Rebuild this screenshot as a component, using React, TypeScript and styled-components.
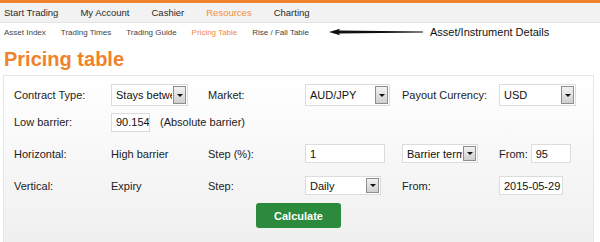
import React from 'react'
import styled, { createGlobalStyle } from 'styled-components'

const Global = createGlobalStyle`
	body {
		margin: 0;
		background: #fff;
		font-family: 'Liberation Sans', Arial, sans-serif;
		color: #333;
	}
`

const ORANGE = '#f0822b'

const TopNav = styled.nav`
	border-top: 3px solid ${ORANGE};
	background: #f2f2f2;
	border-bottom: 1px solid #e2e2e2;
	height: 19px;
	display: flex;
	align-items: center;
	gap: 22px;
	padding-left: 4px;
	font-size: 9.5px;
`

const NavItem = styled.span<{ $active?: boolean }>`
	color: ${(p) => (p.$active ? '#f39040' : '#2a2a2a')};
`

const SubNav = styled.div`
	height: 18px;
	display: flex;
	align-items: center;
	padding-left: 4px;
	font-size: 8px;
`

const SubItems = styled.div`
	display: flex;
	gap: 15px;
`

const SubItem = styled.span<{ $active?: boolean }>`
	color: ${(p) => (p.$active ? '#f18a3c' : '#444')};
`

const Note = styled.div`
	display: flex;
	align-items: center;
	margin-left: 20px;
	gap: 7px;
	font-size: 11px;
	color: #111;
`

const Heading = styled.h1`
	margin: 5px 0 0 4px;
	font-size: 20px;
	line-height: 26px;
	font-weight: bold;
	color: ${ORANGE};
`

const Panel = styled.section`
	margin: 3px 6px 0 3px;
	border: 1px solid #e6e6e6;
	border-bottom: none;
	background: linear-gradient(#fff, #efefef);
	padding: 8px 10px 20px;
	font-size: 11px;
	color: #222;
`

const Grid = styled.div`
	display: grid;
	grid-template-columns: repeat(6, 97px);
	grid-template-rows: 22px 32px 31px 33px;
	align-items: center;
`

const Cell = styled.div`
	display: flex;
	align-items: center;
	gap: 10px;
	white-space: nowrap;
`

const FromCell = styled(Cell)`
	gap: 3px;
`

const Field = styled.div<{ $w: number; $h?: number }>`
	width: ${(p) => p.$w}px;
	height: ${(p) => p.$h ?? 19}px;
	flex-shrink: 0;
	box-sizing: border-box;
	border: 1px solid #dcdcdc;
	background: #fff;
	display: flex;
	align-items: center;
	overflow: hidden;
	font-size: 11px;
	color: #111;
`

const FieldText = styled.span`
	flex: 1;
	padding-left: 4px;
	overflow: hidden;
	white-space: nowrap;
`

const DropButton = styled.span`
	width: 13px;
	align-self: stretch;
	margin: 1px;
	box-sizing: border-box;
	border: 1px solid #8e8e8e;
	background: linear-gradient(#f2f2f2, #cfcfcf);
	display: flex;
	align-items: center;
	justify-content: center;

	&::after {
		content: '';
		border-left: 3px solid transparent;
		border-right: 3px solid transparent;
		border-top: 3px solid #111;
	}
`

const Actions = styled.div`
	display: flex;
	justify-content: center;
	margin-top: 1px;
`

const CalcButton = styled.button`
	width: 85px;
	height: 25px;
	border: none;
	border-radius: 3px;
	background: #2b8a3b;
	color: #fff;
	font-family: inherit;
	font-size: 11px;
	font-weight: bold;
`

function Select({ value, w, h }: { value: string; w: number; h?: number }) {
	return (
		<Field $w={w} $h={h}>
			<FieldText>{value}</FieldText>
			<DropButton />
		</Field>
	)
}

function Input({ value, w }: { value: string; w: number }) {
	return (
		<Field $w={w}>
			<FieldText>{value}</FieldText>
		</Field>
	)
}

function Arrow() {
	return (
		<svg width="94" height="8" viewBox="0 0 94 8">
			<polygon points="0,4 11,0.8 10,2.6 94,3.6 94,4.4 10,5.4 11,7.2" fill="#111" />
		</svg>
	)
}

export default function App() {
	return (
		<>
			<Global />
			<TopNav>
				<NavItem>Start Trading</NavItem>
				<NavItem>My Account</NavItem>
				<NavItem>Cashier</NavItem>
				<NavItem $active>Resources</NavItem>
				<NavItem>Charting</NavItem>
			</TopNav>
			<SubNav>
				<SubItems>
					<SubItem>Asset Index</SubItem>
					<SubItem>Trading Times</SubItem>
					<SubItem>Trading Guide</SubItem>
					<SubItem $active>Pricing Table</SubItem>
					<SubItem>Rise / Fall Table</SubItem>
				</SubItems>
				<Note>
					<Arrow />
					<span>Asset/Instrument Details</span>
				</Note>
			</SubNav>
			<Heading>Pricing table</Heading>
			<Panel>
				<Grid>
					<Cell>Contract Type:</Cell>
					<Cell><Select value="Stays between" w={77} h={22} /></Cell>
					<Cell>Market:</Cell>
					<Cell><Select value="AUD/JPY" w={85} h={22} /></Cell>
					<Cell>Payout Currency:</Cell>
					<Cell><Select value="USD" w={77} h={22} /></Cell>

					<Cell>Low barrier:</Cell>
					<Cell>
						<Input value="90.154" w={39} />
						<span>(Absolute barrier)</span>
					</Cell>
					<Cell />
					<Cell />
					<Cell />
					<Cell />

					<Cell>Horizontal:</Cell>
					<Cell>High barrier</Cell>
					<Cell>Step (%):</Cell>
					<Cell><Input value="1" w={80} /></Cell>
					<Cell><Select value="Barrier terms" w={76} /></Cell>
					<FromCell>
						<span>From:</span>
						<Input value="95" w={40} />
					</FromCell>

					<Cell>Vertical:</Cell>
					<Cell>Expiry</Cell>
					<Cell>Step:</Cell>
					<Cell><Select value="Daily" w={76} /></Cell>
					<Cell>From:</Cell>
					<Cell><Input value="2015-05-29" w={64} /></Cell>
				</Grid>
				<Actions>
					<CalcButton>Calculate</CalcButton>
				</Actions>
			</Panel>
		</>
	)
}
